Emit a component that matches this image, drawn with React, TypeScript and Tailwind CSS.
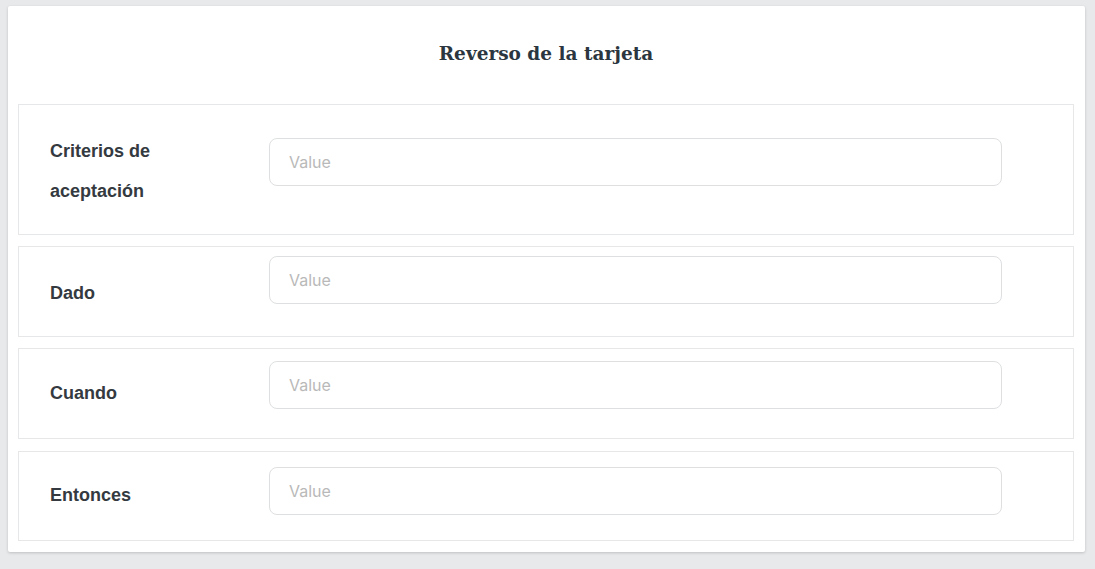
import React from 'react';

const rows = [
  { label: 'Criterios de aceptación', rowPad: 'pt-[26px] pb-[23px]', inputTop: 'mt-[7px]', labelTop: '' },
  { label: 'Dado', rowPad: 'pt-[9px] pb-[23px]', inputTop: 'mt-0', labelTop: 'mt-[17px]' },
  { label: 'Cuando', rowPad: 'pt-[12px] pb-[25px]', inputTop: 'mt-0', labelTop: 'mt-[12px]' },
  { label: 'Entonces', rowPad: 'pt-[15px] pb-[25px] mt-px', inputTop: 'mt-0', labelTop: 'mt-[8px]' },
];

export default function App() {
  return (
    <div className="min-h-[569px] w-full bg-[#e8e9eb] pl-2 pr-[10px] pt-[6px] pb-[17px]">
      <div className="rounded-[2px] bg-white pl-[10px] pr-[11px] pb-[11px] shadow-[0_1px_3px_rgba(0,0,0,0.18)]">
        <div className="flex h-[98px] items-start justify-center pt-[36px]">
          <h1 className="font-['DejaVu_Serif',serif] text-[18.5px] leading-[24px] font-bold text-[#2b3640]">
            Reverso de la tarjeta
          </h1>
        </div>
        <div className="flex flex-col gap-[11px]">
          {rows.map((r) => (
            <div
              key={r.label}
              className={`flex items-start border border-[#e6e7e9] pl-[31px] ${r.rowPad}`}
            >
              <div
                className={`w-[219px] shrink-0 font-['Liberation_Sans',sans-serif] text-[18px] font-bold leading-[40px] text-[#343a40] ${r.labelTop}`}
              >
                {r.label === 'Criterios de aceptación' ? (
                  <>
                    Criterios de
                    <br />
                    aceptación
                  </>
                ) : (
                  r.label
                )}
              </div>
              <input
                placeholder="Value"
                className={`h-[48px] w-[733px] rounded-[8px] border border-[#dedfe1] px-[19px] font-['Inter',sans-serif] text-[16px] text-[#333] outline-none placeholder:text-[#b9b9b9] ${r.inputTop}`}
              />
            </div>
          ))}
        </div>
      </div>
    </div>
  );
}
